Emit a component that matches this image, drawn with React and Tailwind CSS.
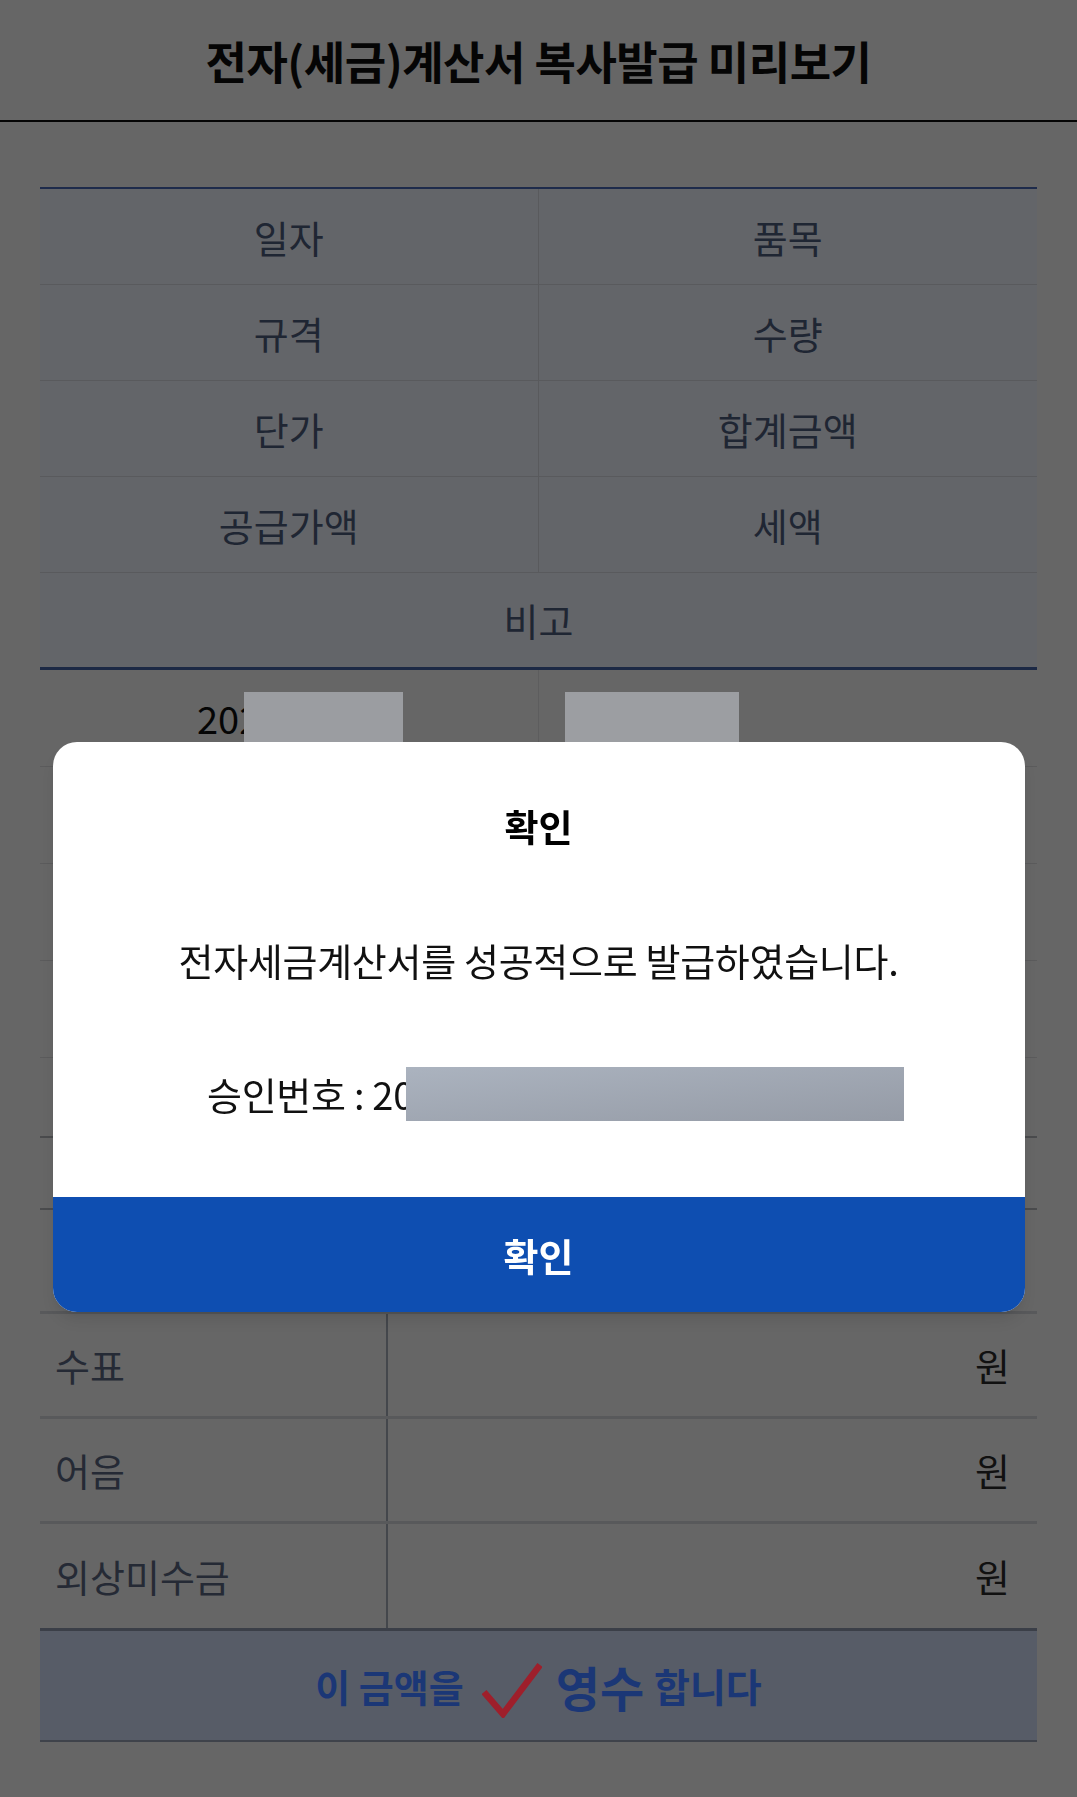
import React from "react";

const headRows = [
  ["일자", "품목"],
  ["규격", "수량"],
  ["단가", "합계금액"],
  ["공급가액", "세액"],
];

const payRows = ["현금", "수표", "어음", "외상미수금"];

const CheckMark = () => (
  <svg width="60" height="56" viewBox="0 0 60 56" fill="none">
    <path d="M2 30 L21 52 L58 3" stroke="#9e1f2b" strokeWidth="6.5" strokeLinejoin="miter" />
  </svg>
);

const App = () => {
  return (
    <div className="min-h-screen bg-[#666666] font-['Noto_Sans_CJK_KR','Noto_Sans',sans-serif]">
      {/* Header */}
      <header className="h-[122px] flex items-center justify-center border-b-2 border-[#050505]">
        <h1 className="text-[45px] font-bold leading-none tracking-[-0.5px] text-[#050505]">
          전자(세금)계산서 복사발급 미리보기
        </h1>
      </header>

      {/* Item table */}
      <div className="mx-[40px] mt-[65px] border-t-2 border-[#1e2b4b]">
        {headRows.map(([a, b]) => (
          <div key={a} className="grid grid-cols-2 h-[96px] border-b border-[#595a5d] bg-[#636569]">
            <div className="flex items-center justify-center border-r border-[#595a5d] text-[38px] leading-none text-[#1f2633]">
              {a}
            </div>
            <div className="flex items-center justify-center text-[38px] leading-none text-[#1f2633]">
              {b}
            </div>
          </div>
        ))}
        <div className="h-[97px] flex items-center justify-center border-b-[3px] border-[#1c2945] bg-[#636569] text-[38px] leading-none text-[#1f2633]">
          비고
        </div>

        {/* Data rows (mostly hidden behind dialog) */}
        <div className="grid grid-cols-2 h-[97px] border-b border-[#5b5b5c]">
          <div className="flex items-center pl-[157px] border-r border-[#5d5d5e]">
            <span className="text-[38px] leading-none text-[#050505]">202</span>
            <div className="-ml-[16px] w-[159px] h-[53px] bg-[#9b9da1]"></div>
          </div>
          <div className="flex items-center pl-[26px]">
            <div className="w-[174px] h-[53px] bg-[#9c9ea2]"></div>
          </div>
        </div>
        <div className="grid grid-cols-2 h-[97px] border-b border-[#5b5b5c]">
          <div className="border-r border-[#5d5d5e]"></div>
          <div></div>
        </div>
        <div className="grid grid-cols-2 h-[97px] border-b border-[#5b5b5c]">
          <div className="border-r border-[#5d5d5e]"></div>
          <div></div>
        </div>
        <div className="grid grid-cols-2 h-[97px] border-b border-[#5b5b5c]">
          <div className="border-r border-[#5d5d5e]"></div>
          <div></div>
        </div>
        <div className="h-[80px] border-b-2 border-[#4a4b4d]"></div>
      </div>

      {/* Payment table */}
      <div className="mx-[40px] mt-[70px] border-t-2 border-[#4a4b4d]">
        {payRows.map((label, i) => (
          <div
            key={label}
            className={
              i === payRows.length - 1
                ? "grid grid-cols-[348px_1fr] h-[104px]"
                : i === 0
                ? "grid grid-cols-[348px_1fr] h-[104px] border-b-[3px] border-[#58595b]"
                : "grid grid-cols-[348px_1fr] h-[105px] border-b-[3px] border-[#58595b]"
            }
          >
            <div className="flex items-center pl-[15px] border-r-2 border-[#44474c] text-[38px] leading-none text-[#252a35]">
              {label}
            </div>
            <div className="flex items-center justify-end pr-[27px] text-[38px] leading-none text-[#111111]">
              원
            </div>
          </div>
        ))}
        <div className="h-[114px] flex items-center justify-center border-t-[3px] border-b-2 border-t-[#3b3f48] border-b-[#3f434b] bg-[#575c67]">
          <span className="text-[38px] font-bold leading-none text-[#1b3776]">이 금액을</span>
          <span className="ml-[18px] mt-[8px]">
            <CheckMark />
          </span>
          <span className="ml-[14px] text-[48px] font-bold leading-none text-[#1b3776]">영수</span>
          <span className="ml-[10px] text-[39px] font-bold leading-none text-[#1b3776]">합니다</span>
        </div>
      </div>

      {/* Dialog */}
      <div className="fixed inset-0 flex justify-center items-start pt-[742px]">
        <div className="w-[972px] bg-white rounded-[24px] overflow-hidden shadow-lg">
          <div className="flex flex-col items-center pt-[63px] pb-[76px]">
            <h2 className="text-[37px] font-bold leading-[43px] text-black">확인</h2>
            <p className="mt-[91px] text-[38px] leading-[42px] tracking-[-0.3px] text-[#111111]">
              전자세금계산서를 성공적으로 발급하였습니다.
            </p>
            <div className="mt-[86px] h-[54px] flex items-center pl-[34px]">
              <span className="text-[38px] leading-none tracking-[-0.3px] text-[#111111]">승인번호 : 20</span>
              <div className="-ml-[8px] w-[498px] h-[54px] bg-linear-to-br from-[#abb3bf] to-[#959ba6]"></div>
            </div>
          </div>
          <button className="w-full h-[115px] flex items-center justify-center bg-[#0e4eb1] text-[38px] font-bold leading-none text-white">
            확인
          </button>
        </div>
      </div>
    </div>
  );
};

export default App;
